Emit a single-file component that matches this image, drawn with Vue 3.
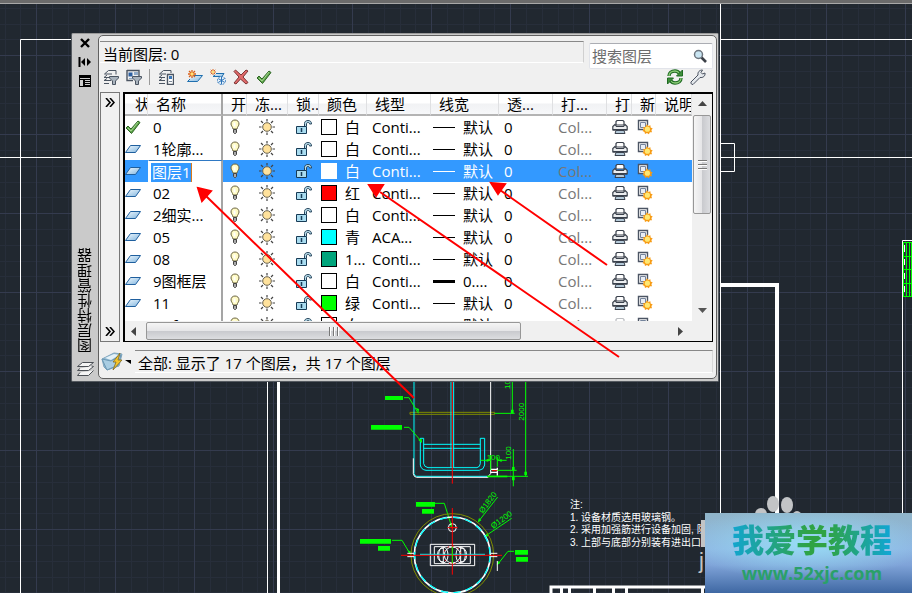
<script setup>
import { ref } from 'vue'

const layers = ref([
  { name: '0', current: true, color: '#fff', colorName: '白', line: 'Conti...', weight: '默认' },
  { name: '1轮廓...', color: '#fff', colorName: '白', line: 'Conti...', weight: '默认' },
  { name: '图层1', editing: true, color: '#fff', colorName: '白', line: 'Conti...', weight: '默认' },
  { name: '02', color: '#f00', colorName: '红', line: 'Conti...', weight: '默认' },
  { name: '2细实...', color: '#fff', colorName: '白', line: 'Conti...', weight: '默认' },
  { name: '05', color: '#0ff', colorName: '青', line: 'ACA...', weight: '默认' },
  { name: '08', color: '#00a57c', colorName: '1...', line: 'Conti...', weight: '默认' },
  { name: '9图框层', color: '#fff', colorName: '白', line: 'Conti...', weight: '0....', thick: true },
  { name: '11', color: '#0f0', colorName: '绿', line: 'Conti...', weight: '默认' },
  { name: 'Defpoi...', color: '#fff', colorName: '白', line: 'Conti...', weight: '默认', noPlot: true },
])

const columns = [
  { key: 'status', label: '状' },
  { key: 'name', label: '名称' },
  { key: 'on', label: '开' },
  { key: 'freeze', label: '冻...' },
  { key: 'lock', label: '锁..' },
  { key: 'color', label: '颜色' },
  { key: 'line', label: '线型' },
  { key: 'weight', label: '线宽' },
  { key: 'trans', label: '透...' },
  { key: 'style', label: '打...' },
  { key: 'plot', label: '打' },
  { key: 'vp', label: '新' },
  { key: 'desc', label: '说明' },
]

const leftTools = [
  { id: 'filter-props', label: '新建特性过滤器' },
  { id: 'filter-group', label: '新建组过滤器' },
  { id: 'states', label: '图层状态管理器', split: true },
  { id: 'new-layer', label: '新建图层', gap: true },
  { id: 'new-frozen', label: '新建冻结图层' },
  { id: 'delete', label: '删除图层' },
  { id: 'check', label: '置为当前' },
]
const search = ref('')
</script>

<template>
  <main class="desktop">
    <svg class="defs" aria-hidden="true">
      <defs>
        <linearGradient id="sheetFill" x1="0" y1="0" x2="1" y2="1">
          <stop offset="0" stop-color="#f4fbff" /><stop offset="1" stop-color="#7fb4de" />
        </linearGradient>
        <symbol id="check" viewBox="0 0 16 16">
          <path d="M1 9l2-2 3 3 7-8 2 1.500-8.500 11z" fill="#5fa54c" stroke="#2c6423" stroke-width="1" />
          <path d="M3 9l3 3 7-9" fill="none" stroke="#a5d690" stroke-width="1" />
        </symbol>
        <symbol id="sheet" viewBox="0 0 16 16">
          <path d="M5.500 4.500h10l-5 7H.5z" fill="url(#sheetFill)" stroke="#1f5f9e" />
        </symbol>
        <symbol id="bulb" viewBox="0 0 10 16">
          <path d="M5 1C2.500 1 1 2.700 1 5c0 1.700 1.500 2.600 2 5h4c.5-2.400 2-3.300 2-5 0-2.300-1.500-4-4-4z" fill="#fffbc4" stroke="#6b6440" />
          <path d="M4.500 3.500v4" stroke="#fff" stroke-width="2" />
          <path d="M3.500 10.500h3v3l-1 1h-1l-1-1z" fill="#aaa" stroke="#444" />
        </symbol>
        <symbol id="sun" viewBox="0 0 16 16">
          <path d="M8 0v2.500M8 13.500V16M0 8h2.500M13.500 8H16M2 2l2 2M12 12l2 2M2 14l2-2M12 4l2-2" stroke="#444" stroke-width="1.200" />
          <circle cx="8" cy="8" r="4.300" fill="#ffe29c" stroke="#66604f" />
        </symbol>
        <symbol id="lock" viewBox="0 0 16 16">
          <path d="M8.500 7V4.500C8.500 2.500 10 1.500 12 1.500s3.500 1 3.500 3.500h-2c0-1-.5-1.500-1.500-1.500s-1.500.5-1.500 1.500v2" fill="#b7dcea" stroke="#27455c" />
          <path d="M.5 7.500h10v7H.5z" fill="#a9dcf0" stroke="#173b56" />
          <path d="M5.500 9v4" stroke="#173b56" stroke-width="1.500" />
        </symbol>
        <symbol id="printer" viewBox="0 0 16 16">
          <path d="M4 6V2.500l1-1h6l1 1V6z" fill="#fff" stroke="#3a414c" stroke-width="1.200" />
          <path d="M3 5.500L.8 7.500v3.500h14.400V7.500L13 5.500l-1.500 2h-7z" fill="#eceef0" stroke="#3a414c" stroke-width="1.200" />
          <path d="M1 10h14v1.500H1z" fill="#3a414c" />
          <path d="M4 11.500h8l1 3H3z" fill="#b4c9d8" stroke="#3a414c" />
        </symbol>
        <symbol id="viewport" viewBox="0 0 16 16">
          <path d="M6.500 10.500h-5v-9h9v5" fill="#fff" stroke="#4c5564" stroke-width="1.400" />
          <path d="M3.500 3.500h5v5h-5z" fill="#e8edf5" stroke="#75849c" />
          <path d="M10 5.200l1.300 1.800 2.100-.7.200 2.200 2.100.9-1.300 1.700.6 2.100-2.200.1-.9 1.900-1.900-1.100-2 1-.5-2.200-2-.8 1.300-1.800-.8-2 2.200-.2z" fill="#f79b13" />
          <circle cx="10.400" cy="10.200" r="2.600" fill="#ffe873" />
        </symbol>
        <symbol id="funnel" viewBox="0 0 16 16">
          <path d="M6.500 7.500h9v1.500l-3 3v3.500h-3V12l-3-3z" fill="#a9b3bd" stroke="#4b5562" />
        </symbol>
        <symbol id="filter-props" viewBox="0 0 16 16">
          <path d="M13 5.500V1.500H5.500l-4 3.500H9M6 8.500H1l3-2.500M8 11.500H1l3-2M6 14.500H1" fill="none" stroke="#4b5562" />
          <use href="#funnel" />
        </symbol>
        <symbol id="filter-group" viewBox="0 0 16 16">
          <path d="M1 1.500h12v6M1 1v10.500h6" fill="none" stroke="#4b5562" stroke-width="1.400" />
          <path d="M2.500 3.500h4v4h-4z" fill="#2c5fa0" /><path d="M8 3h4v3H8zM3 9h4v1H3z" fill="#8faac8" />
          <use href="#funnel" />
        </symbol>
        <symbol id="states" viewBox="0 0 16 16">
          <path d="M13 4V1.500H5.500l-4 3.500H8M7 8.500H1l3-2.500M7 11.500H1l3-2M7 14.500H1" fill="none" stroke="#4b5562" />
          <path d="M9.500 5.500h6v10h-6z" fill="#fff" stroke="#4b5562" stroke-width="1.400" />
          <path d="M11 7h3v3h-3z" fill="#3b78b8" /><path d="M11 12.500h3" stroke="#7f8b99" />
        </symbol>
        <symbol id="burst" viewBox="0 0 8 8">
          <path d="M4 0v8M0 4h8M1 1l6 6M7 1L1 7" stroke="#d9601a" stroke-width="1.300" />
          <circle cx="4" cy="4" r="1.700" fill="#ffe27a" />
        </symbol>
        <symbol id="new-layer" viewBox="0 0 16 16">
          <path d="M6 6.500h9.500l-5 6H.5L3 10" fill="url(#sheetFill)" stroke="#1f6fae" />
          <use href="#burst" x="1" y="1" width="8" height="8" />
        </symbol>
        <symbol id="new-frozen" viewBox="0 0 16 16">
          <path d="M6 4.500h8l-2 3H3L5 6" fill="url(#sheetFill)" stroke="#1f6fae" />
          <use href="#burst" width="6" height="6" />
          <circle cx="11.500" cy="11.500" r="4" fill="#eaf4fb" stroke="#2c73b8" stroke-dasharray="2 1" />
          <path d="M11.500 8v7M8.500 9.700l6 3.600M8.500 13.300l6-3.600" stroke="#2c73b8" />
        </symbol>
        <symbol id="delete" viewBox="0 0 16 16">
          <path d="M1 2.500L2.500 1 8 6l5-5 2 1-5 6 5 5.500-2 1.500-5.500-5L3 15l-2-1 5-6z" fill="#e06a6a" stroke="#7c3434" />
        </symbol>
      </defs>
    </svg>

    <svg class="drawing" role="img" aria-label="CAD 图纸">
      <defs>
        <pattern id="grid" x="36" y="55" width="79" height="79" patternUnits="userSpaceOnUse">
          <path d="M16.500 0v79M32.500 0v79M48.500 0v79M63.500 0v79M0 16.500h79M0 32.500h79M0 48.500h79M0 63.500h79" stroke="#272e3a" />
          <path d="M.5 0v79M0 .5h79" stroke="#343b4e" />
        </pattern>
      </defs>
      <rect width="100%" height="100%" fill="#212830" />
      <rect width="100%" height="100%" fill="url(#grid)" />
      <g class="white-lines">
        <path d="M20.500 600V39.500H80M0 157.500H80M720.500 0v600M720 39.500h1000M720 157.500h1000M720 143.500h14.500v28H720M267.500 380v220M902.500 600V240.500h100" />
        <path d="M278.500 380v220" class="w3" />
        <path d="M720 285h57v315" class="w4" />
        <path d="M551 600v-13h170M561.500 588v8M569.500 588v8M594.500 588v8M613.500 588v8M626.500 588v8M702.500 588v8" class="w3" />
      </g>
      <path d="M903.500 242v54M906.500 242v54M909.500 242v54M911.500 242v54M903 242.500h9M903 256.500h9M903 269.500h9M903 283.500h9M903 296.500h9" stroke="#0f0" />
      <path d="M904.500 245v7M904.500 259v6M904.500 273v6M904.500 286v6" stroke="#fff" />

      <g transform="translate(340 375) scale(.3333)" fill="none" stroke-width="3">
        <path d="M210 112h254v6H210z" stroke="#7f8c00" />
        <path d="M222 0v296q2 8 8 8h212" stroke="#0ff" />
        <path d="M220 250v46q2 11 10 11h215M452 0v296l-10 11" stroke="#fff" />
        <path d="M333 0v278M341 0v278M241 190h10v76q2 10 13 12h147q9-2 10-12v-76h13v80q-2 14-16 16H258q-15-2-17-16zM251 208h170M251 220h170" stroke="#0ff" />
        <path d="M337 0v326" stroke="#f00" />
        <path d="M452 283h20M452 292h20M472 278v24" stroke="#fff" stroke-width="4" />
        <path d="M456 287h16" stroke="#f00" />
        <path d="M517 0v115M464 115h60M557 0v304M442 304h122M421 256h32M472 256h28M472 286h58M520 222v112M452 240v45M472 245v30" stroke="#0f0" />
        <path d="M192 68h15l28 47M192 157h15l38 43M285 385h28l22 70M156 496h30l24 40M473 366l-58 74M515 430l-80 54M522 529h-18l-30 38" stroke="#0f0" />
        <g fill="#0f0">
          <path d="M135 63h54v12h-54zM93 150h93v14H93zM228 381h57v14h-57zM246 402h36v14h-36zM60 492h93v14H60zM114 513h36v14h-36zM525 525h39v14h-39zM528 546h36v14h-36zM513 104h8v10h-8zM553 290h8v10h-8zM236 112l-9-14 10 4zM246 204l-12-10 11-3zM516 276h8v10h-8zM516 306h8v10h-8zM440 252l12 4-12 5zM485 252l-12 4 12 5zM413 443l4-14 7 7zM433 487l8-12 5 8zM470 571l4-13 7 6zM334 460l-5-16 8 2zM211 540l-9-14 10 3z" />
          <path d="M442 302h60v5h-60z" />
        </g>
        <g class="dims">
          <text x="440" y="255">100</text>
          <text transform="translate(509 42) rotate(-90)">10</text>
          <text transform="translate(551 137) rotate(-90)">2000</text>
          <text transform="translate(514 254) rotate(-90)">100</text>
          <text transform="translate(428 416) rotate(-53)">Ø1820</text>
          <text transform="translate(460 462) rotate(-36)">Ø1200</text>
        </g>
        <circle cx="337" cy="540" r="124" stroke="#7f8c00" />
        <circle cx="337" cy="540" r="114" stroke="#fff" stroke-width="5" />
        <circle cx="337" cy="540" r="113" stroke="#0ff" stroke-width="4" stroke-dasharray="22 16" />
        <circle cx="337" cy="458" r="12" stroke="#fff" />
        <path d="M323 458h30" stroke="#f00" />
        <path d="M271 508h133v64H271zM283 515h108v51H283zM310 520h-8q-10 8-10 20t10 20h8M362 520h10q8 8 8 20t-8 20h-10M202 535h20M202 545h20M452 535h20M452 545h20M472 558v30M310 516v50M362 516v50" stroke="#fff" />
        <ellipse cx="310" cy="540" rx="14" ry="24" stroke="#fff" />
        <ellipse cx="362" cy="540" rx="14" ry="24" stroke="#fff" />
        <circle cx="337" cy="540" r="24" stroke="#fff" />
        <circle cx="337" cy="540" r="27" stroke="#f00" stroke-dasharray="4 12" />
        <path d="M240 538h195" stroke="#0ff" />
        <path d="M183 541h303M337 399v200" stroke="#f00" />
        <path d="M337 515v50" stroke="#0f0" />
      </g>

      <g class="notes">
        <text x="570" y="508">注:</text>
        <text x="570" y="521">1. 设备材质选用玻璃钢。</text>
        <text x="570" y="533">2. 采用加强筋进行设备加固, 防</text>
        <text x="570" y="546">3. 上部与底部分别装有进出口。</text>
      </g>
      <g fill="#c2c4c6">
        <ellipse cx="773" cy="504" rx="6" ry="8" /><ellipse cx="787" cy="505" rx="6" ry="8" />
        <ellipse cx="761" cy="514" rx="6" ry="6" /><ellipse cx="797" cy="517" rx="5" ry="6" />
        <path d="M701 520h6v27h-6z" />
        <text x="699" y="568" class="ghost">j</text>
      </g>
    </svg>

    <section class="palette" aria-label="图层特性管理器">
      <aside class="spine">
        <button aria-label="关闭"><svg width="12" height="10"><path d="M2 1l8 8M10 1L2 9" stroke="#000" stroke-width="2.400" /></svg></button>
        <button aria-label="自动隐藏"><svg width="14" height="12"><path d="M1.500 1v10" stroke="#000" stroke-width="2" /><path d="M7 2v8L3 6zM9 2v8l4-4z" /></svg></button>
        <button aria-label="特性"><svg width="12" height="12"><path d="M0 0h12v12H0z" /><path d="M1 3.500h10M6 5.500h5M6 7.500h5M6 9.500h5" stroke="#ccc" /><path d="M1 5h3v6H1z" fill="#ccc" /></svg></button>
        <h1>图层特性管理器</h1>
        <svg class="spine-icon" width="17" height="16"><path d="M5.500 1.500h11l-5 4H.5zM3 7.500l-2.500 2h11l5-4-2-.5M3 11.500l-2.500 3h11l5-5" fill="#f4f4f4" stroke="#4b4f55" /></svg>
      </aside>

      <div class="body">
        <header class="top">
          <p class="current">当前图层: 0</p>
          <label class="search">
            <input v-model="search" type="text" placeholder="搜索图层" aria-label="搜索图层" />
            <svg width="14" height="14"><path d="M8 8l5 5" stroke="#3c4148" stroke-width="2.600" /><circle cx="5.500" cy="5.500" r="4" fill="#c9e5f2" stroke="#6d757e" stroke-width="1.500" /></svg>
          </label>
        </header>

        <nav class="tools">
          <button v-for="t in leftTools" :key="t.id" :class="{ split: t.split, gap: t.gap }" :aria-label="t.label">
            <svg width="16" height="16"><use :href="'#' + t.id" /></svg>
          </button>
          <span class="spacer"></span>
          <button aria-label="刷新"><svg width="16" height="16" viewBox="0 0 16 16"><path d="M2 7c0-3 2.500-5 6-5 2 0 3.500 1 4.500 2.500M14 9c0 3-2.500 5-6 5-2 0-3.500-1-4.500-2.500" fill="none" stroke="#1f6b22" stroke-width="3.400" /><path d="M2 7c0-3 2.500-5 6-5 2 0 3.500 1 4.500 2.500M14 9c0 3-2.500 5-6 5-2 0-3.500-1-4.500-2.500" fill="none" stroke="#8ccb78" stroke-width="1.300" /><path d="M15.500 1v6h-6zM.5 15V9h6z" fill="#3f8f3a" stroke="#1f6b22" /></svg></button>
          <button class="wrench" aria-label="设置"><svg width="16" height="16" viewBox="0 0 16 16"><path d="M1 13l7-7c-.5-3 1.500-5 4.500-5L11 3.500 12.500 5 15 4c.5 3-2 5-5 4.500L3 15.500c-1.500 0-2.500-1-2-2.500z" fill="#e4e8ec" stroke="#4a5260" /></svg></button>
        </nav>

        <div class="content">
          <div class="filters">
            <button aria-label="展开过滤器"><svg width="10" height="9"><path d="M1 0l4 4.500L1 9M5 0l4 4.500L5 9" fill="none" stroke="#000" stroke-width="1.600" /></svg></button>
            <button aria-label="展开过滤树"><svg width="10" height="9"><path d="M1 0l4 4.500L1 9M5 0l4 4.500L5 9" fill="none" stroke="#000" stroke-width="1.600" /></svg></button>
          </div>

          <div class="grid">
            <div class="view">
              <table>
                <colgroup><col v-for="c in columns" :key="c.key" :class="'w-' + c.key" /></colgroup>
                <thead>
                  <tr><th v-for="c in columns" :key="c.key" :class="'h-' + c.key" scope="col">{{ c.label }}</th></tr>
                </thead>
                <tbody>
                  <tr v-for="l in layers" :key="l.name" :class="{ selected: l.editing }">
                    <td><svg width="16" height="16"><use :href="l.current ? '#check' : '#sheet'" /></svg></td>
                    <td class="name" :class="{ edit: l.editing }">
                      <input v-if="l.editing" v-model="l.name" type="text" aria-label="图层名称" />
                      <template v-else>{{ l.name }}</template>
                    </td>
                    <td class="on"><svg width="10" height="16"><use href="#bulb" /></svg></td>
                    <td class="freeze"><svg width="16" height="16"><use href="#sun" /></svg></td>
                    <td class="lock"><svg width="16" height="16"><use href="#lock" /></svg></td>
                    <td><div class="pair color"><i class="swatch" :style="{ background: l.color }"></i><span>{{ l.colorName }}</span></div></td>
                    <td class="line">{{ l.line }}</td>
                    <td><div class="pair"><i class="stroke" :class="{ thick: l.thick }"></i><span>{{ l.weight }}</span></div></td>
                    <td class="line">0</td>
                    <td class="line dim">Col...</td>
                    <td class="plot" :class="{ faded: l.noPlot }"><svg width="16" height="16"><use href="#printer" /></svg></td>
                    <td class="vp"><svg width="16" height="16"><use href="#viewport" /></svg></td>
                    <td></td>
                  </tr>
                </tbody>
              </table>
            </div>
            <div class="vbar">
              <svg width="9" height="5"><path d="M0 5l4.500-5L9 5z" fill="#444" /></svg>
              <div class="vthumb"><i></i><i></i><i></i></div>
              <svg width="9" height="5"><path d="M0 0l4.500 5L9 0z" fill="#555" /></svg>
            </div>
            <div class="hbar">
              <svg width="5" height="9"><path d="M5 0L0 4.500 5 9z" fill="#444" /></svg>
              <div class="hthumb"><i></i><i></i><i></i></div>
              <span class="spacer"></span>
              <svg width="5" height="9"><path d="M0 0l5 4.500L0 9z" fill="#444" /></svg>
            </div>
          </div>
        </div>

        <footer class="bottom">
          <button class="tray" aria-label="图层过滤器">
            <svg width="30" height="20" viewBox="0 0 30 20"><path d="M1 8l12-6 8 1-3 12-12 4-3-3z" fill="#8fb9d3" stroke="#7fa5bd" /><path d="M1 8l9 2 10-6-3 10-11 5z" fill="#a9cde2" stroke="#6c98b4" /><path d="M4 7l9-4 5 1-8 5z" fill="#e4f1f8" /><path d="M19 2l-7 9h3l-3 8 9-10h-4z" fill="#f4c52c" stroke="#806a20" stroke-width=".8" /><path d="M24 9h6v4z" fill="#000" /></svg>
          </button>
          <p class="status">全部: 显示了 17 个图层，共 17 个图层</p>
        </footer>
      </div>
    </section>

    <svg class="arrows" aria-hidden="true">
      <g stroke="#f00" stroke-width="2" fill="#f00">
        <path d="M206 196l208 202M380 192l239 165M500 190l107 75" />
        <path d="M198 188l13 3-9 10zM369 185l14 0-7 11zM491 183l14 1-7 10z" />
      </g>
    </svg>

    <a class="site" href="#">
      <strong>我爱学教程</strong>
      <span>www.52xjc.com</span>
    </a>
  </main>
</template>

<style>
body { margin: 0; background: #212830; }
</style>

<style scoped>
.desktop { position: relative; min-height: 100vh; overflow: hidden; font-family: "Open Sans", "Noto Sans CJK SC", sans-serif; font-size: 15px; color: #000; border-top: 3px solid #6b6b6b; box-sizing: border-box; }
.desktop::before { content: ""; position: absolute; z-index: 1; inset: 0 0 auto; height: 1px; background: #a8a8a8; }
.defs { position: absolute; width: 0; height: 0; }
.drawing, .arrows { position: absolute; left: 0; top: -3px; width: 100%; height: 100vh; }
.arrows { pointer-events: none; z-index: 3; }
.white-lines { fill: none; stroke: #fff; stroke-width: 1; }
.w3 { stroke-width: 3; }
.w4 { stroke-width: 4; }
.dims { fill: #0f0; stroke: none; font: 24px "Liberation Sans", sans-serif; }
.notes { fill: #fff; font: 10px "Liberation Sans", "Noto Sans CJK SC", sans-serif; }
.ghost { font: 22px "Liberation Sans", sans-serif; }
button { border: 0; padding: 0; background: none; display: flex; align-items: center; justify-content: center; color: inherit; }
p, h1 { margin: 0; font-weight: 400; }
svg { display: block; flex: none; }

.palette { position: absolute; z-index: 2; left: 71px; right: 193px; top: 30px; min-width: 560px; display: flex; padding: 1px 1px 2px 0; box-sizing: border-box; background: #cacaca; border: 1px solid #555a60; border-top-color: #9a9a9a; border-radius: 2px; }
.spine { width: 26px; display: flex; flex-direction: column; align-items: center; gap: 8px; padding: 2px 0; box-sizing: border-box; }
.spine button { height: 11px; }
.spine h1 { writing-mode: vertical-rl; transform: rotate(180deg); font-size: 15px; line-height: 20px; margin-top: auto; }
.body { flex: 1; min-width: 0; padding: 5px 3px 5px 1px; background: #f0f0f0; border: 1px solid #606060; border-radius: 5px; }

.top { display: flex; gap: 5px; height: 28px; }
.current { flex: 1; height: 20px; line-height: 24px; padding-left: 3px; border: 1px solid #d0d0d0; border-width: 1px 1px 1px 0; border-top-color: #888; border-bottom-color: #fff; }
.search { display: flex; align-items: center; width: 124px; height: 26px; margin-top: 2px; padding: 0 5px 0 2px; box-sizing: border-box; background: #fff; border: 1px solid #e2e4ea; border-top-color: #abadb3; border-radius: 2px; }
.search input { flex: 1; min-width: 0; padding: 0; border: 0; outline: 0; font: inherit; background: none; }
.search input::placeholder { color: #6d6d6d; opacity: 1; }

.tools { display: flex; align-items: center; gap: 7px; height: 16px; padding: 0 7px 0 3px; margin-bottom: 7px; }
.tools .split { border-left: 1px solid #999; padding-left: 8px; }
.tools .gap { margin-left: 6px; }
.spacer { flex: 1; }

.content { display: flex; gap: 3px; height: 250px; }
.filters { width: 20px; flex: none; display: flex; flex-direction: column; justify-content: space-between; padding: 5px 0; border: 1px solid #777; box-sizing: border-box; }
.grid { flex: 1; min-width: 0; display: grid; grid-template: minmax(0, 1fr) 20px / minmax(0, 1fr) 20px; border: 1px solid #000; border-width: 2px 1px 1px 2px; background: #fff; box-sizing: border-box; }
.view { overflow: hidden; }
table { width: 100%; table-layout: fixed; border-collapse: separate; border-spacing: 0; }
.w-status { width: 23px; } .w-name { width: 75px; } .w-on { width: 24px; } .w-freeze { width: 41px; }
.w-lock { width: 31px; } .w-color { width: 48px; } .w-line { width: 64px; } .w-weight { width: 68px; }
.w-trans { width: 54px; } .w-style { width: 54px; } .w-plot { width: 25px; } .w-vp { width: 24px; }
th { height: 22px; padding: 0 0 0 8px; box-sizing: border-box; font-weight: 400; text-align: left; line-height: 20px; overflow: hidden; white-space: nowrap; background: linear-gradient(#fff 45%, #f1f2f4 50%, #f7f8fa); border-right: 1px solid #dfe0e2; border-bottom: 2px solid #b4b4b4; }
.h-status { padding-left: 10px; }
td { height: 22px; padding: 0; box-sizing: border-box; line-height: 22px; white-space: nowrap; overflow: hidden; }
.name, .h-name { border-right: 2px solid #a5a5a5; }
.name { padding-left: 5px; }
.selected { background: #3399ff; color: #fff; }
.edit { padding: 1px 0 0 2px; background: #fff; border-top: 1px solid #2f79c4; border-left: 1px solid #fff; }
.edit input { display: block; width: 41px; height: 19px; padding: 0 0 0 1px; box-sizing: border-box; border: 0; border-right: 1px solid #d97a1c; outline: 0; font: inherit; color: #fff; background: #3399ff; }
.on { padding-left: 7px; } .freeze { padding-left: 12px; } .lock { padding-left: 8px; }
.line { padding-left: 5px; }
.dim { color: #777; }
.pair { display: flex; align-items: center; gap: 8px; height: 22px; padding-left: 2px; }
.swatch { width: 16px; height: 16px; flex: none; box-sizing: border-box; border: 1px solid #000; }
.selected .swatch { border-color: #fff; }
.stroke { width: 22px; height: 1px; flex: none; background: currentColor; }
.stroke.thick { height: 3px; }
.plot { padding-left: 5px; } .vp { padding-left: 5px; }
.faded svg { opacity: .35; }

.vbar { display: flex; flex-direction: column; align-items: center; justify-content: space-between; padding: 7px 0 8px; background: #f0f0f0; }
.vthumb { width: 18px; height: 99px; margin: 9px 0 auto; display: flex; flex-direction: column; align-items: center; justify-content: center; gap: 2px; box-sizing: border-box; border: 1px solid #979797; border-radius: 2px; background: linear-gradient(90deg, #f5f5f5, #e6e6e8 48%, #c9cace 52%, #dcdde0); }
.vthumb i { width: 9px; height: 2px; background: #777; border-bottom: 1px solid #fff; box-sizing: border-box; }
.hbar { grid-column: 1 / 3; display: flex; align-items: center; gap: 10px; padding: 0 29px 0 6px; background: #f0f0f0; }
.hthumb { width: 68%; height: 18px; display: flex; align-items: center; justify-content: center; gap: 2px; box-sizing: border-box; border: 1px solid #979797; border-radius: 2px; background: linear-gradient(#f5f5f5, #e6e6e8 48%, #c9cace 52%, #dcdde0); }
.hthumb i { width: 2px; height: 9px; background: #777; border-right: 1px solid #fff; box-sizing: border-box; }

.bottom { display: flex; gap: 3px; padding-top: 8px; }
.tray { width: 32px; height: 22px; }
.status { flex: 1; height: 21px; line-height: 25px; padding-left: 3px; border: 1px solid #d8d8d8; border-width: 1px 1px 1px 0; border-top-color: #888; border-bottom-color: #fff; white-space: nowrap; }

.site { position: absolute; z-index: 2; right: 0; bottom: 0; width: 207px; height: 80px; display: flex; flex-direction: column; align-items: center; padding: 6px 0 0 7px; box-sizing: border-box; text-decoration: none; background: radial-gradient(ellipse 60% 45% at 48% 38%, #97dcf5, transparent), linear-gradient(#90b5c9, #8eb4e2 45%, #7fa3d8 65%, #3f68a3); }
.site strong { font-family: "Noto Sans CJK SC", sans-serif; font-size: 32px; line-height: 38px; font-weight: 900; color: transparent; background: linear-gradient(90deg, #12a5cf, #2fa344 48%, #2fa344 60%, #0fa6d8); background-clip: text; }
.site span { font-size: 18px; line-height: 32px; font-weight: 700; color: #2aa069; }
</style>
